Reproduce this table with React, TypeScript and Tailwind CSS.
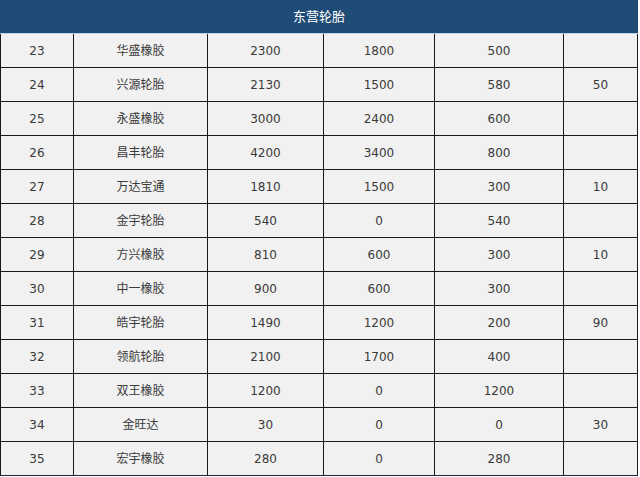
import React from "react";

const rows: [string, string, string, string, string, string][] = [
  ["23", "华盛橡胶", "2300", "1800", "500", ""],
  ["24", "兴源轮胎", "2130", "1500", "580", "50"],
  ["25", "永盛橡胶", "3000", "2400", "600", ""],
  ["26", "昌丰轮胎", "4200", "3400", "800", ""],
  ["27", "万达宝通", "1810", "1500", "300", "10"],
  ["28", "金宇轮胎", "540", "0", "540", ""],
  ["29", "方兴橡胶", "810", "600", "300", "10"],
  ["30", "中一橡胶", "900", "600", "300", ""],
  ["31", "皓宇轮胎", "1490", "1200", "200", "90"],
  ["32", "领航轮胎", "2100", "1700", "400", ""],
  ["33", "双王橡胶", "1200", "0", "1200", ""],
  ["34", "金旺达", "30", "0", "0", "30"],
  ["35", "宏宇橡胶", "280", "0", "280", ""],
];

const widths = ["w-[73px]", "w-[134px]", "w-[116px]", "w-[111px]", "w-[129px]", "w-[75px]"];

export default function App() {
  return (
    <div
      className="w-[640px] h-[477px] bg-white overflow-hidden"
      style={{ fontFamily: '"DejaVu Sans", "Noto Sans CJK SC", sans-serif' }}
    >
      <div className="w-[638px]">
        <div className="h-[33px] bg-[#1f4b77] flex items-center justify-center text-white text-[13px]">
          东营轮胎
        </div>
        <div className="h-[1px] bg-[#bcd3e8]" />
        {rows.map((r, i) => (
          <div
            key={i}
            className={`flex h-[34px] border-b ${i === rows.length - 1 ? "border-[#1e2a3a]" : "border-[#1a1a1a]"} bg-[#f1f1f1]`}
          >
            {r.map((c, j) => (
              <div
                key={j}
                className={`${widths[j]} flex items-center justify-center text-[12px] text-[#3a3a3a] border-l border-[#1a1a1a] ${j === 5 ? "border-r" : ""}`}
              >
                {c}
              </div>
            ))}
          </div>
        ))}
      </div>
    </div>
  );
}
